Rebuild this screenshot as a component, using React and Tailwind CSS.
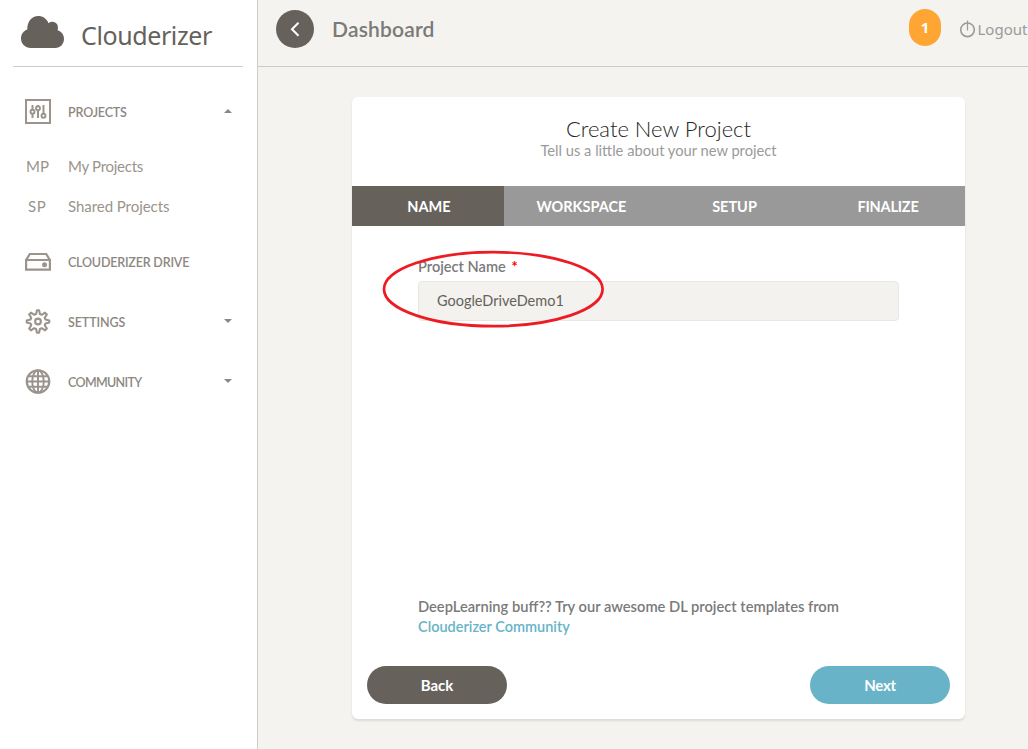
import React from "react";

const caret = "mb-[2px] shrink-0 w-0 h-0 border-x-4 border-x-transparent";

function CloudLogo() {
  return (
    <svg className="shrink-0" width="43" height="32" viewBox="0 0 43 32" fill="#66615b">
      <path d="M9.800 32C4.200 32 0 27.900 0 22.600c0-4.400 2.500-7.600 6.300-9C6 5.700 10.800 0 17.200 0c4.700 0 8.600 2.700 10.300 7.200 1-1 2.400-1.500 3.800-1.500 4.200 0 6.700 4 5.300 8.600 3.900 1.100 6.400 4.600 6.400 8.700 0 5-4 9-8.500 9z" />
    </svg>
  );
}
function SlidersIcon() {
  return (
    <svg className="mb-px" width="26" height="25" viewBox="0 0 26 25" fill="none" stroke="#9a948c" strokeWidth="2">
      <rect x="1" y="1" width="24" height="23" />
      <path d="M7.500 6v4.500M7.500 15V19M13 6v1.500M13 11.500V19M18.500 6v9" strokeWidth="2" />
      <circle cx="7.500" cy="12.700" r="2" strokeWidth="1.900" />
      <circle cx="13" cy="9.300" r="2" strokeWidth="1.900" />
      <circle cx="18.500" cy="16.700" r="2" strokeWidth="1.900" />
    </svg>
  );
}
function DriveIcon() {
  return (
    <svg width="26" height="26" viewBox="0 0 26 26" fill="none" stroke="#9a948c" strokeWidth="2.200">
      <path d="M1.100 11h23.800v9.700H1.100zM1.200 10.800L4.800 5h16.400l3.600 5.800" />
      <circle cx="19.500" cy="15.800" r="2.500" fill="#9a948c" stroke="none" />
    </svg>
  );
}
function GearIcon() {
  return (
    <svg className="mb-px" width="26" height="25" viewBox="0 0 26 26" fill="none" stroke="#9a948c" strokeWidth="2.200" strokeLinejoin="round">
      <path d="M11.900 1.300h2.200l.9 3.900 1.900.8 3.400-2.200 1.900 1.900L20 9.100l.8 1.900 3.900.9v2.200l-3.900.9-.8 1.900 2.200 3.400-1.900 1.900-3.400-2.200-1.900.8-.9 3.900h-2.200l-.9-3.900-1.900-.8-3.400 2.200-1.900-1.900L6 16.900 5.200 15l-3.900-.9v-2.200l3.900-.9L6 9.100 3.800 5.700l1.900-1.900L9.100 6l1.900-.8z" />
      <circle cx="13" cy="13" r="3" />
    </svg>
  );
}
function GlobeIcon() {
  return (
    <svg className="mb-px" width="26" height="25" viewBox="0 0 26 26" fill="none" stroke="#9a948c" strokeWidth="2.300">
      <circle cx="13" cy="13" r="11.700" />
      <ellipse cx="13" cy="13" rx="6" ry="11.600" strokeWidth="2" />
      <path d="M13 1v24M1 13h24M3.500 7.500h19M3.500 18.500h19" strokeWidth="2" />
    </svg>
  );
}

function NavItem({ icon, label, arrow, tracking = "", className = "" }) {
  return (
    <div className={"flex h-[26px] items-center pl-[25px] pr-[25px] text-[#8d877f] " + className}>
      {icon}
      <span className={"ml-[17px] flex-1 whitespace-nowrap pt-[2px] text-[12.5px] font-semibold leading-[18px] " + tracking}>{label}</span>
      {arrow === "up" && <span className={caret + " border-b-4 border-b-[#8d877f]"} />}
      {arrow === "down" && <span className={caret + " border-t-4 border-t-[#8d877f]"} />}
    </div>
  );
}

function SubItem({ short, label, tracking = "", pad, className = "" }) {
  return (
    <div className={"flex h-[20px] items-center text-[15px] text-[#9a948c] " + className}>
      <span className={"w-[68px] " + pad}>{short}</span>
      <span className={tracking}>{label}</span>
    </div>
  );
}

export default function App() {
  return (
    <div className="flex h-[749px] w-[1028px] overflow-hidden bg-[#f4f3ef] font-['Lato',sans-serif]">
      <aside className="w-[258px] shrink-0 border-r border-[#cfcdc9] bg-white">
        <div className="ml-[13px] mr-[14px] flex h-[67px] border-b border-[#cccac6] pl-2 pt-[16px]">
          <CloudLogo />
          <span className="ml-[17px] whitespace-nowrap font-['Noto_Sans',sans-serif] text-[25px] leading-[38px] tracking-[-0.4px] text-[#66615b]">Clouderizer</span>
        </div>
        <nav>
          <NavItem icon={<SlidersIcon />} label="PROJECTS" arrow="up" tracking="tracking-[-0.15px]" className="mt-[32px]" />
          <SubItem short="MP" label="My Projects" tracking="tracking-[-0.28px]" pad="pl-[26px]" className="mt-[31px]" />
          <SubItem short="SP" label="Shared Projects" tracking="tracking-[-0.05px]" pad="pl-[28px] tracking-[0.7px]" className="mt-[20px]" />
          <NavItem icon={<DriveIcon />} label="CLOUDERIZER DRIVE" tracking="tracking-[-0.2px]" className="mt-[33px]" />
          <NavItem icon={<GearIcon />} label="SETTINGS" arrow="down" tracking="tracking-[-0.1px]" className="mt-[34px]" />
          <NavItem icon={<GlobeIcon />} label="COMMUNITY" arrow="down" tracking="tracking-[-0.65px]" className="mt-[34px]" />
        </nav>
      </aside>
      <div className="flex min-w-0 flex-1 flex-col">
        <header className="flex h-[67px] shrink-0 items-start border-b border-[#cccac6] pl-[18px]">
          <button className="mt-[10px] flex size-[38px] items-center justify-center rounded-full bg-[#66615b]">
            <svg width="10" height="16" viewBox="0 0 10 16" fill="none" stroke="#fff" strokeWidth="2"><path d="M8.500 1.700L2 8.200l6.500 6.500" /></svg>
          </button>
          <h1 className="ml-[18px] mt-[14px] text-[21px] font-semibold leading-[30px] tracking-[0.2px] text-[#7a7a78]">Dashboard</h1>
          <span className="ml-auto mt-[9px] flex h-[37px] w-[32px] items-center justify-center rounded-[16px] bg-[#ffa534] font-['Open_Sans',sans-serif] text-[15px] font-bold text-white">1</span>
          <span className="ml-[18px] mt-[19px] flex w-[69px] items-center whitespace-nowrap font-['Noto_Sans',sans-serif] text-[15px] leading-[20px] text-[#9a9a9a]">
            <svg className="mr-[1.5px] shrink-0" width="17" height="18" viewBox="0 0 17 18" fill="none" stroke="#9a9a9a" strokeWidth="1.600"><circle cx="8.500" cy="9.800" r="6.800" /><path d="M8.500 0.500v10" strokeWidth="1.200" /></svg>
            Logout
          </span>
        </header>
        <main className="ml-[94px] mt-[30px] flex h-[622px] w-[613px] flex-col rounded-md bg-white shadow-[0_2px_2px_rgba(204,197,185,0.5)]">
          <div className="h-[89px] pt-[19px] text-center">
            <h2 className="text-[22px] font-light leading-[26px] text-[#252422]">Create New Project</h2>
            <p className="text-[14.7px] leading-[17px] text-[#9a9a9a]">Tell us a little about your new project</p>
          </div>
          <div className="grid h-[40px] grid-cols-[152px_154px_153px_154px] bg-[#999] text-center text-[14.5px] font-bold leading-[40px] text-white">
            <span className="h-[40px] bg-[#66615b] pl-[2px] pt-px">NAME</span>
            <span className="pl-px pt-px">WORKSPACE</span>
            <span className="pt-px">SETUP</span>
            <span className="pt-px tracking-[-0.2px]">FINALIZE</span>
          </div>
          <div className="relative h-[370px] px-[66px] pt-[31px] text-[14.6px] font-semibold leading-[20px] text-[#7a7a7a]">
            <p>Project Name <span className="ml-[2px] font-bold text-[#ff0000]">*</span></p>
            <div className="mt-[4px] h-[40px] rounded-[4px] border border-[#e8e7e3] bg-[#f3f2ee] pl-[18px] text-[14.5px] font-normal leading-[38px] text-[#66615b]">GoogleDriveDemo1</div>
            <svg className="absolute left-[30px] top-[24px]" width="223" height="79" viewBox="0 0 223 79" fill="none" stroke="#ed1c24" strokeWidth="2.700"><ellipse cx="111.300" cy="39.200" rx="109.300" ry="37" /></svg>
          </div>
          <div className="h-[70px] px-[66px] font-semibold leading-[20px] text-[#7a7a7a]">
            <p className="whitespace-nowrap text-[14.7px]">DeepLearning buff?? Try our awesome DL project templates from</p>
            <p className="pt-px text-[14.5px] text-[#68b3c8]">Clouderizer Community</p>
          </div>
          <div className="flex justify-between px-[15px] text-center text-[15px] font-bold leading-[38px] text-white">
            <button className="h-[38px] w-[140px] rounded-full bg-[#66615b]">Back</button>
            <button className="h-[38px] w-[140px] rounded-full bg-[#68b3c8] tracking-[-0.3px]">Next</button>
          </div>
        </main>
      </div>
    </div>
  );
}
